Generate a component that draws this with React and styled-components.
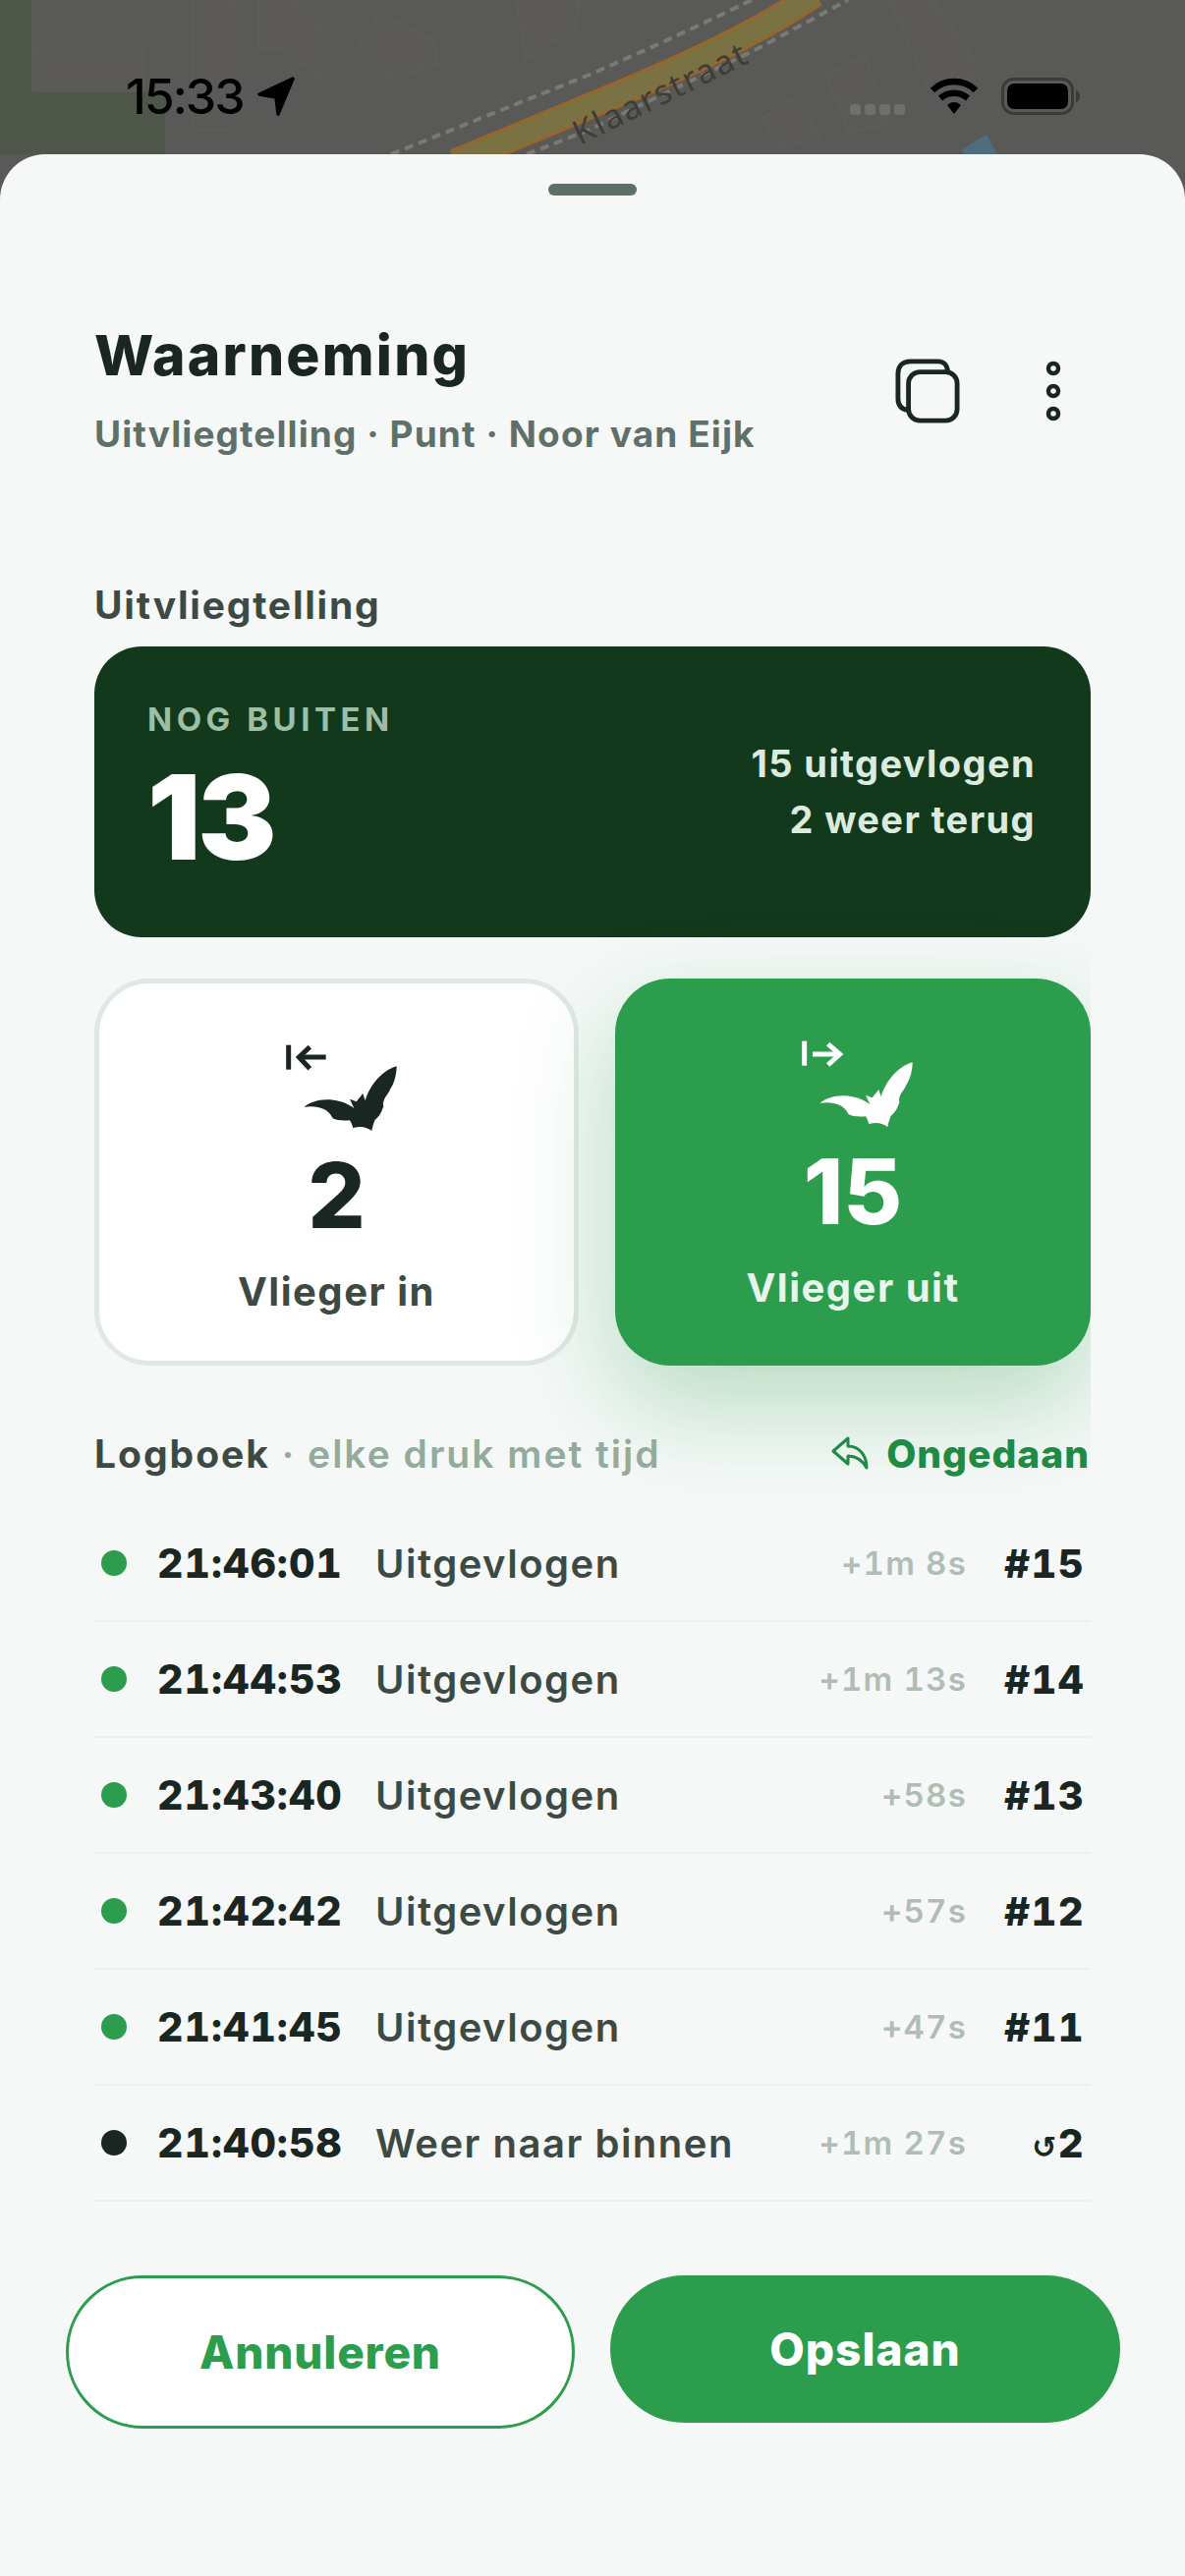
import React from "react";
import styled, { createGlobalStyle } from "styled-components";

const Global = createGlobalStyle`
  html, body { margin: 0; padding: 0; background: #f5f8f7; }
  * { box-sizing: border-box; }
`;

const FONT = `Inter, "Noto Sans", "DejaVu Sans", sans-serif`;
const GREEN = "#2c9c4d";

const Screen = styled.div`
  width: 1206px;
  height: 2622px;
  overflow: hidden;
  display: flex;
  flex-direction: column;
  background: #595957;
  font-family: ${FONT};
  color: #1a2622;
`;

const MapArea = styled.div`
  position: relative;
  height: 157px;
  flex: none;
  overflow: hidden;
`;

const MapDrawing = styled.svg`
  position: absolute;
  left: 0;
  top: 0;
`;

const StatusBar = styled.div`
  position: relative;
  display: flex;
  align-items: center;
  justify-content: space-between;
  height: 40px;
  margin-top: 78px;
  padding: 0 106px 0 128px;
`;

const StatusLeft = styled.div`
  display: flex;
  align-items: center;
  gap: 14px;
`;

const StatusTime = styled.span`
  font-size: 50px;
  font-weight: 500;
  line-height: 40px;
  letter-spacing: -2px;
  color: #000;
`;

const StatusRight = styled.div`
  display: flex;
  align-items: center;
  gap: 23px;
`;

const SignalDots = styled.svg`
  margin-top: 28px;
`;

const Sheet = styled.div`
  flex: 1;
  background: #f5f8f7;
  border-radius: 46px 46px 0 0;
  padding: 30px 96px 0;
  display: flex;
  flex-direction: column;
`;

const Handle = styled.div`
  width: 90px;
  height: 12px;
  border-radius: 6px;
  background: #5e6f66;
  align-self: center;
  flex: none;
`;

const Header = styled.header`
  display: flex;
  justify-content: space-between;
  align-items: flex-start;
  margin-top: 129px;
`;

const Title = styled.h1`
  margin: 0;
  font-size: 57px;
  line-height: 68px;
  font-weight: 800;
  letter-spacing: 2.2px;
  color: #1a2622;
`;

const Subtitle = styled.p`
  margin: 22px 0 0;
  font-size: 37px;
  line-height: 48px;
  font-weight: 700;
  letter-spacing: 1.1px;
  color: #5f7068;
`;

const Actions = styled.div`
  display: flex;
  align-items: center;
  gap: 87px;
  margin: 37px 30px 0 0;
`;

const SectionLabel = styled.h2`
  margin: 126px 0 18px;
  font-size: 39px;
  line-height: 48px;
  font-weight: 700;
  letter-spacing: 1.8px;
  color: #3d4a44;
`;

const StatCard = styled.section`
  height: 296px;
  border-radius: 48px;
  background: #12391c;
  padding: 54px 56px 0 54px;
  display: flex;
  justify-content: space-between;
`;

const StatEyebrow = styled.div`
  font-size: 33px;
  line-height: 40px;
  font-weight: 700;
  letter-spacing: 4.5px;
  color: #9dbfa5;
`;

const StatNumber = styled.div`
  font-size: 120px;
  line-height: 120px;
  font-weight: 900;
  letter-spacing: -3px;
  margin-top: 20px;
  color: #fff;
`;

const StatSide = styled.div`
  text-align: right;
  font-size: 38px;
  line-height: 57px;
  font-weight: 700;
  letter-spacing: 1.4px;
  color: #dcebdf;
  padding-top: 37px;
`;

const TapRow = styled.div`
  display: grid;
  grid-template-columns: 493px 484px;
  gap: 37px;
  margin-top: 42px;
`;

const TapButton = styled.button`
  height: 394px;
  border-radius: 56px;
  font-family: inherit;
  display: flex;
  flex-direction: column;
  align-items: center;
  padding: ${(p) => (p.$primary ? "62px" : "61px")} 0 0;
  border: ${(p) => (p.$primary ? "none" : "5px solid #dfe8e3")};
  background: ${(p) => (p.$primary ? GREEN : "#fff")};
  color: ${(p) => (p.$primary ? "#fff" : "#1a2622")};
  box-shadow: ${(p) => (p.$primary ? "0 40px 100px rgba(44,156,77,0.3)" : "none")};
  clip-path: ${(p) => (p.$primary ? "inset(-200px 0 -200px -200px)" : "none")};
`;

const TapCount = styled.div`
  font-size: 92px;
  line-height: 100px;
  font-weight: 800;
  margin-top: 13px;
`;

const TapLabel = styled.div`
  font-size: 40px;
  line-height: 50px;
  font-weight: 700;
  letter-spacing: 1.5px;
  margin-top: 23px;
  color: ${(p) => (p.$primary ? "#e8f5ec" : "#3d4a44")};
`;

const LogHeader = styled.div`
  position: relative;
  display: flex;
  justify-content: space-between;
  align-items: center;
  margin-top: 64px;
  height: 50px;
`;

const LogTitle = styled.div`
  font-size: 39px;
  font-weight: 700;
  letter-spacing: 2px;
  color: #3d4a44;
`;

const LogHint = styled.span`
  font-weight: 600;
  color: #93ab9a;
`;

const UndoButton = styled.div`
  display: flex;
  align-items: center;
  gap: 18px;
  font-size: 39px;
  font-weight: 800;
  letter-spacing: 1px;
  color: #1f8a43;
  padding-right: 1px;
`;

const LogList = styled.div`
  margin-top: 29px;
`;

const LogRow = styled.div`
  height: 118px;
  border-bottom: 2px solid #ecf0ee;
  display: flex;
  align-items: center;
  padding: 0 6px 0 7px;
`;

const Dot = styled.span`
  width: 26px;
  height: 26px;
  border-radius: 50%;
  flex: none;
  background: ${(p) => (p.$dark ? "#1a2622" : GREEN)};
`;

const LogTime = styled.span`
  margin-left: 31px;
  width: 222px;
  flex: none;
  font-size: 41px;
  font-weight: 800;
  letter-spacing: 1px;
  font-variant-numeric: tabular-nums;
  color: #1a2622;
`;

const LogText = styled.span`
  flex: 1;
  font-size: 40px;
  font-weight: 600;
  letter-spacing: 1.5px;
  color: #3d4a44;
`;

const LogDelta = styled.span`
  font-size: 33px;
  font-weight: 600;
  letter-spacing: 1.2px;
  color: #b0bdb6;
  font-variant-numeric: tabular-nums;
`;

const LogCount = styled.span`
  width: 120px;
  flex: none;
  text-align: right;
  font-size: 40px;
  font-weight: 800;
  letter-spacing: 1.4px;
  font-variant-numeric: tabular-nums;
  color: #1a2622;
`;

const Loop = styled.span`
  font-family: "DejaVu Sans", sans-serif;
  font-size: 30px;
  font-weight: 700;
`;

const Footer = styled.footer`
  display: grid;
  grid-template-columns: 518px 519px;
  gap: 36px;
  align-items: start;
  margin: 75px -30px 0 -29px;
`;

const OutlineButton = styled.button`
  height: 156px;
  border-radius: 78px;
  border: 3px solid ${GREEN};
  background: #fff;
  color: ${GREEN};
  font-family: inherit;
  font-size: 46px;
  font-weight: 800;
  letter-spacing: 0.8px;
`;

const SolidButton = styled.button`
  height: 150px;
  border-radius: 75px;
  border: none;
  background: ${GREEN};
  color: #fff;
  font-family: inherit;
  font-size: 46px;
  font-weight: 800;
  letter-spacing: 1px;
`;

const Bat = "M145 260 C165 243 195 233 235 238 C262 242 282 250 298 263 L285 235 L305 243 L325 218 L332 240 C342 205 375 150 428 135 C428 160 420 190 408 205 C405 215 398 222 395 227 C388 238 385 250 388 258 C378 283 375 288 362 298 C358 308 354 320 352 332 C340 322 320 316 295 323 C292 312 288 305 285 300 C262 302 245 300 233 294 C228 283 220 275 213 270 C195 260 170 255 145 260 Z";

const BatIcon = ({ out }) => (
  <svg width="124" height="92" viewBox="60 65 372 276" fill="none" aria-hidden="true">
    <path d={Bat} fill="currentColor" />
    {out ? (
      <g stroke="currentColor" strokeWidth="15">
        <path d="M98 70V145" />
        <path d="M123 110H206" />
        <path d="M170 79L206 110L170 143" />
      </g>
    ) : (
      <g stroke="currentColor" strokeWidth="15">
        <path d="M98 70V145" />
        <path d="M130 107H212" />
        <path d="M163 76L130 107L163 142" />
      </g>
    )}
  </svg>
);

const rows = [
  ["21:46:01", "Uitgevlogen", "+1m 8s", "#15"],
  ["21:44:53", "Uitgevlogen", "+1m 13s", "#14"],
  ["21:43:40", "Uitgevlogen", "+58s", "#13"],
  ["21:42:42", "Uitgevlogen", "+57s", "#12"],
  ["21:41:45", "Uitgevlogen", "+47s", "#11"],
];

export default function App() {
  return (
    <Screen>
      <Global />
      <MapArea>
        <MapDrawing width="1206" height="157" viewBox="0 0 1206 157">
          <rect width="1206" height="157" fill="#595957" />
          <rect width="32" height="157" fill="#4e5649" />
          <rect x="32" y="93" width="136" height="64" fill="#4e5649" />
          <g fill="#5b5a58" stroke="#5f5e5b" strokeWidth="1.5">
            <path d="M34 50H146V93H34Z" />
            <path d="M195 0H240V132H195Z" />
            <path d="M263 0H300L328 30V80L285 50H263Z" />
            <path d="M365 48L385 15L442 40L445 65L398 80Z" />
            <path d="M525 0L590 0L585 28L535 62Z" />
            <path d="M905 0H950L1000 75L945 90Z" />
            <path d="M840 75L880 55L905 125L865 135Z" />
            <path d="M775 120L810 100L835 140L795 150Z" />
          </g>
          <path d="M463 165L600 108C680 75 760 40 820 0L830 -6" fill="none" stroke="#98652d" strokeWidth="27" />
          <path d="M463 165L600 108C680 75 760 40 820 0L830 -6" fill="none" stroke="#7b7244" strokeWidth="21" />
          <path d="M398 157L600 76C660 50 720 22 765 0" fill="none" stroke="#7b7a72" strokeWidth="4" strokeDasharray="9 6" />
          <path d="M536 157L600 132L770 50L863 0" fill="none" stroke="#7b7a72" strokeWidth="4" strokeDasharray="9 6" />
          <path d="M979 152L1004 137L1015 157H981Z" fill="#4f6c7d" />
          <text transform="translate(590 148) rotate(-26)" fontFamily="'Noto Sans', sans-serif" fontSize="34" letterSpacing="1.8" fill="#3f3d38">Klaarstraat</text>
        </MapDrawing>
        <StatusBar>
          <StatusLeft>
            <StatusTime>15:33</StatusTime>
            <svg width="38" height="40" viewBox="0 0 38 40" aria-hidden="true">
              <path d="M36 2L2 18L19 21L21 38Z" fill="#000" stroke="#000" strokeWidth="3.5" strokeLinejoin="round" />
            </svg>
          </StatusLeft>
          <StatusRight>
            <SignalDots width="58" height="12" viewBox="0 0 58 12" aria-hidden="true">
              <g fill="#6f6f6d">
                <rect x="0" width="11" height="11" rx="3" />
                <rect x="15" width="11" height="11" rx="3" />
                <rect x="30" width="11" height="11" rx="3" />
                <rect x="45" width="11" height="11" rx="3" />
              </g>
            </SignalDots>
            <svg width="50" height="38" viewBox="0 0 50 38" aria-hidden="true">
              <g fill="none" stroke="#000" strokeWidth="6.5">
                <path d="M3 13C15 1 35 1 47 13" />
                <path d="M11 21C19 14 31 14 39 21" />
              </g>
              <path d="M18 28C22 24 28 24 32 28L25 37Z" fill="#000" />
            </svg>
            <svg width="81" height="38" viewBox="0 0 81 38" aria-hidden="true">
              <rect x="1.5" y="1.5" width="71" height="35" rx="11" fill="none" stroke="#3a3a39" strokeWidth="3" />
              <rect x="6" y="6" width="62" height="26" rx="7" fill="#000" />
              <path d="M76 13C79 14 80 16 80 19C80 22 79 24 76 25Z" fill="#3a3a39" />
            </svg>
          </StatusRight>
        </StatusBar>
      </MapArea>
      <Sheet>
        <Handle />
        <Header>
          <div>
            <Title>Waarneming</Title>
            <Subtitle>Uitvliegtelling · Punt · Noor van Eijk</Subtitle>
          </div>
          <Actions>
            <svg width="66" height="66" viewBox="0 0 68 68" fill="none" stroke="#1a2622" strokeWidth="5" aria-hidden="true">
              <path d="M55 14C55 7 51 3 45 3H16C8 3 3 8 3 16V42C3 49 7 53 13 54" />
              <rect x="14" y="14" width="51" height="51" rx="12" />
            </svg>
            <svg width="16" height="62" viewBox="0 0 16 62" fill="none" stroke="#1a2622" strokeWidth="4.5" aria-hidden="true">
              <circle cx="8" cy="8" r="5" />
              <circle cx="8" cy="31" r="5" />
              <circle cx="8" cy="54" r="5" />
            </svg>
          </Actions>
        </Header>

        <SectionLabel>Uitvliegtelling</SectionLabel>
        <StatCard>
          <div>
            <StatEyebrow>NOG BUITEN</StatEyebrow>
            <StatNumber>13</StatNumber>
          </div>
          <StatSide>
            15 uitgevlogen
            <br />2 weer terug
          </StatSide>
        </StatCard>

        <TapRow>
          <TapButton>
            <BatIcon />
            <TapCount>2</TapCount>
            <TapLabel>Vlieger in</TapLabel>
          </TapButton>
          <TapButton $primary>
            <BatIcon out />
            <TapCount>15</TapCount>
            <TapLabel $primary>Vlieger uit</TapLabel>
          </TapButton>
        </TapRow>

        <LogHeader>
          <LogTitle>
            Logboek<LogHint> · elke druk met tijd</LogHint>
          </LogTitle>
          <UndoButton>
            <svg width="38" height="34" viewBox="0 0 38 34" fill="none" stroke="#1f8a43" strokeWidth="3" strokeLinejoin="round" aria-hidden="true">
              <path d="M17 2L2 15L17 28V20C25 20 32 25 36 32C36 20 29 10 17 10Z" />
            </svg>
            Ongedaan
          </UndoButton>
        </LogHeader>

        <LogList>
          {rows.map((r) => (
            <LogRow key={r[0]}>
              <Dot />
              <LogTime>{r[0]}</LogTime>
              <LogText>{r[1]}</LogText>
              <LogDelta>{r[2]}</LogDelta>
              <LogCount>{r[3]}</LogCount>
            </LogRow>
          ))}
          <LogRow>
            <Dot $dark />
            <LogTime>21:40:58</LogTime>
            <LogText>Weer naar binnen</LogText>
            <LogDelta>+1m 27s</LogDelta>
            <LogCount>
              <Loop>↺</Loop>2
            </LogCount>
          </LogRow>
        </LogList>

        <Footer>
          <OutlineButton>Annuleren</OutlineButton>
          <SolidButton>Opslaan</SolidButton>
        </Footer>
      </Sheet>
    </Screen>
  );
}
